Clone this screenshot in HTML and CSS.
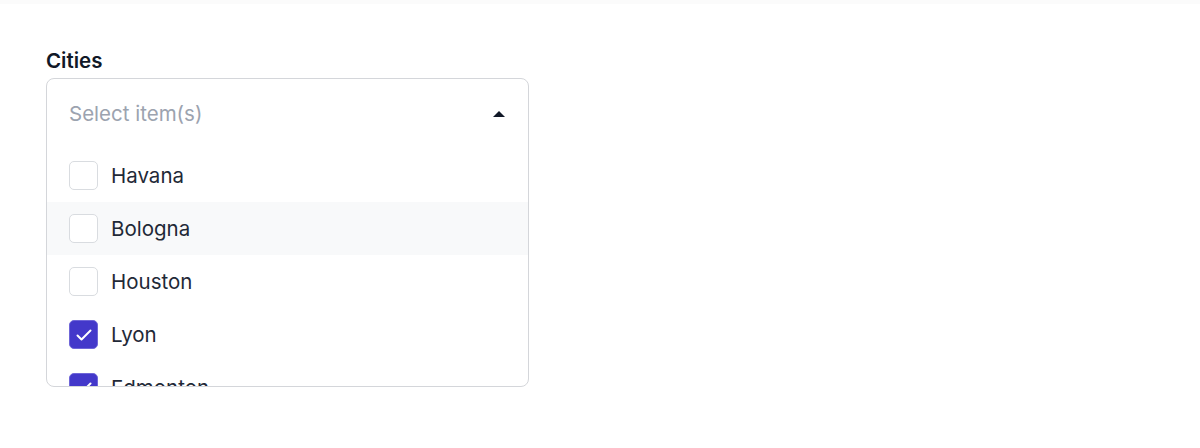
FILE: index.html
```html
<!DOCTYPE html>
<html lang="en">
<head>
    <meta charset="UTF-8">
    <title>Cities</title>
    <link rel="stylesheet" href="styles.css">
</head>
<body>
    <div class="topStrip"></div>

    <section class="field">
        <label class="fieldLabel">Cities</label>
        <div class="select">
            <div class="selectHead">
                <span class="placeholder">Select item(s)</span>
                <span class="caret"></span>
            </div>
            <ul class="options">
                <li class="option">
                    <span class="check"></span>
                    <span>Havana</span>
                </li>
                <li class="option hover">
                    <span class="check"></span>
                    <span>Bologna</span>
                </li>
                <li class="option">
                    <span class="check"></span>
                    <span>Houston</span>
                </li>
                <li class="option">
                    <span class="check checked">
                        <svg viewBox="0 0 20 20" width="20" height="20"><path d="M3.5 10.5l4 4 9-9" fill="none" stroke="#fff" stroke-width="2" stroke-linecap="round" stroke-linejoin="round"/></svg>
                    </span>
                    <span>Lyon</span>
                </li>
                <li class="option">
                    <span class="check checked">
                        <svg viewBox="0 0 20 20" width="20" height="20"><path d="M3.5 10.5l4 4 9-9" fill="none" stroke="#fff" stroke-width="2" stroke-linecap="round" stroke-linejoin="round"/></svg>
                    </span>
                    <span>Edmonton</span>
                </li>
            </ul>
        </div>
    </section>
</body>
</html>
```

FILE: styles.css
```css
*{
    margin: 0;
    padding: 0;
    box-sizing: border-box;
}

body{
    font-family: Inter, "Noto Sans", sans-serif;
    background: #fff;
    color: #111827;
}

.topStrip{
    height: 4px;
    background: #fbfbfb;
}

.field{
    width: 483px;
    margin-left: 46px;
    padding-top: 45px;
}

.fieldLabel{
    display: block;
    font-size: 20.5px;
    font-weight: 600;
    line-height: 24px;
    margin-bottom: 5px;
    color: #111827;
}

.select{
    height: 309px;
    border: 1px solid #d4d6da;
    border-radius: 8px;
    overflow: hidden;
}

.selectHead{
    height: 69px;
    display: flex;
    align-items: center;
    justify-content: space-between;
    padding: 0 23px 0 22px;
}

.placeholder{
    font-size: 20.5px;
    color: #9ca3af;
}

.caret{
    width: 0;
    height: 0;
    border-left: 6px solid transparent;
    border-right: 6px solid transparent;
    border-bottom: 6px solid #111827;
}

.options{
    list-style: none;
}

.option{
    height: 53px;
    display: flex;
    align-items: center;
    gap: 13px;
    padding-left: 22px;
    font-size: 20.5px;
    color: #1f2937;
}

.option:first-child{
    margin-top: 1px;
}

.option.hover{
    background: #f8f9fa;
}

.check{
    width: 29px;
    height: 29px;
    border: 1px solid #d9dce0;
    border-radius: 5px;
    background: #fff;
    display: flex;
    align-items: center;
    justify-content: center;
}

.check.checked{
    background: #4338ca;
    border-color: #6f66d8;
}
```
